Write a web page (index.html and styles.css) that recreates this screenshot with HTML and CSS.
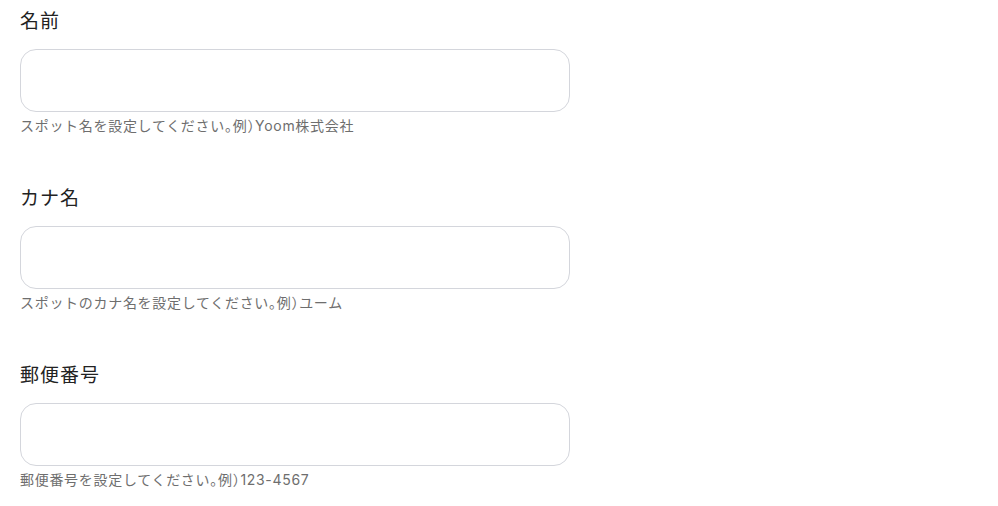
FILE: index.html
```html
<!DOCTYPE html>
<html lang="ja">
<head>
<meta charset="utf-8">
<link rel="stylesheet" href="styles.css">
</head>
<body>
<form class="form">
  <div class="field">
    <label class="label">名前</label>
    <input class="input" type="text">
    <p class="help">スポット名を設定してください<span class="punct">。</span>例<span class="punct">）</span>Yoom株式会社</p>
  </div>
  <div class="field">
    <label class="label">カナ名</label>
    <input class="input" type="text">
    <p class="help">スポットのカナ名を設定してください<span class="punct">。</span>例<span class="punct">）</span>ユーム</p>
  </div>
  <div class="field">
    <label class="label">郵便番号</label>
    <input class="input" type="text">
    <p class="help">郵便番号を設定してください<span class="punct">。</span>例<span class="punct">）</span>123-4567</p>
  </div>
</form>
</body>
</html>
```

FILE: styles.css
```css
* { box-sizing: border-box; }
html, body { margin: 0; padding: 0; background: #fff; }
body {
  font-family: "Inter", "Noto Sans CJK JP", sans-serif;
  color: #222;
}
.form {
  display: flex;
  flex-direction: column;
  gap: 51px;
  padding: 10px 20px 0;
  width: 570px;
}
.field {
  display: flex;
  flex-direction: column;
}
.label {
  font-size: 19px;
  line-height: 24px;
  height: 24px;
  margin-bottom: 15px;
  letter-spacing: 1px;
  color: #222;
}
.input {
  width: 550px;
  height: 63px;
  border: 1px solid #d4d6dc;
  border-radius: 16px;
  background: #fff;
  outline: none;
  font: inherit;
  margin: 0;
}
.help {
  margin: 4px 0 0;
  font-size: 14px;
  line-height: 20px;
  letter-spacing: 0.7px;
  color: #6e6e6e;
}
.punct {
  font-feature-settings: "halt";
}
```
